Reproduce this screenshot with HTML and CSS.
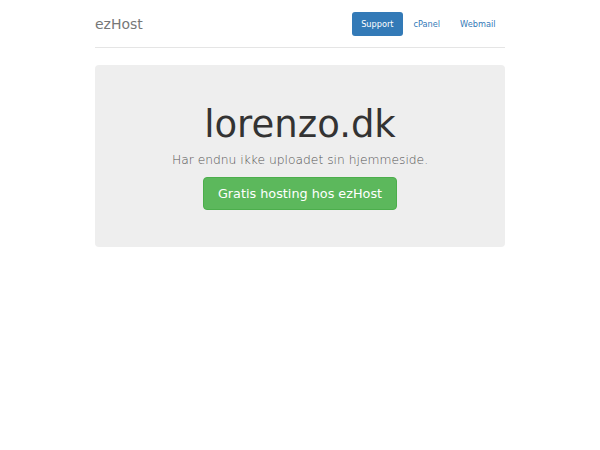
FILE: index.html
```html
<!DOCTYPE html>
<html lang="da">
<head>
<meta charset="utf-8">
<title>lorenzo.dk</title>
<link rel="stylesheet" href="styles.css">
</head>
<body>
<div class="container">
  <header class="header">
    <h3 class="brand">ezHost</h3>
    <nav class="nav">
      <a class="pill active" href="#">Support</a>
      <a class="pill" href="#">cPanel</a>
      <a class="pill" href="#">Webmail</a>
    </nav>
  </header>
  <section class="jumbotron">
    <h1 class="title">lorenzo.dk</h1>
    <p class="lead">Har endnu ikke uploadet sin hjemmeside.</p>
    <a class="btn" href="#">Gratis hosting hos ezHost</a>
  </section>
</div>
</body>
</html>
```

FILE: styles.css
```css
html, body {
  margin: 0;
  padding: 0;
  background: #fff;
}
body {
  font-family: "DejaVu Sans", sans-serif;
  color: #333;
}
.container {
  width: 410px;
  margin: 0 auto;
}
.header {
  display: flex;
  align-items: center;
  justify-content: space-between;
  padding: 12px 0 11px;
  border-bottom: 1px solid #e5e5e5;
}
.brand {
  margin: 0;
  font-size: 14px;
  font-weight: normal;
  color: #777;
  line-height: 24px;
}
.nav {
  display: flex;
}
.pill {
  display: block;
  height: 24px;
  line-height: 24px;
  padding: 0 9.5px;
  margin-left: 1px;
  font-size: 8.2px;
  color: #337ab7;
  text-decoration: none;
  border-radius: 3px;
}
.pill.active {
  background: #337ab7;
  color: #fff;
}
.jumbotron {
  margin-top: 17px;
  background: #eee;
  border-radius: 4px;
  padding: 39px 0 37px;
  text-align: center;
}
.title {
  margin: 0;
  font-size: 37px;
  font-weight: normal;
  line-height: 41px;
  color: #333;
}
.lead {
  margin: 7px 0 8px;
  font-size: 12.3px;
  line-height: 17px;
  font-weight: 200;
  color: #555;
}
.btn {
  display: inline-block;
  box-sizing: border-box;
  height: 33px;
  line-height: 31px;
  padding: 0 14px;
  font-size: 12.8px;
  color: #fff;
  text-decoration: none;
  background: #5cb85c;
  border: 1px solid #4cae4c;
  border-radius: 4px;
}
```
